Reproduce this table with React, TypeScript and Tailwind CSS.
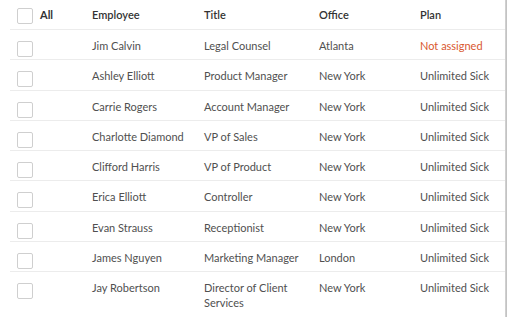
import React from 'react';

// Employee plan assignment table

interface Row {
  name: string;
  title: string;
  office: string;
  plan: string;
}

const rows: Row[] = [
  { name: 'Jim Calvin', title: 'Legal Counsel', office: 'Atlanta', plan: 'Not assigned' },
  { name: 'Ashley Elliott', title: 'Product Manager', office: 'New York', plan: 'Unlimited Sick' },
  { name: 'Carrie Rogers', title: 'Account Manager', office: 'New York', plan: 'Unlimited Sick' },
  { name: 'Charlotte Diamond', title: 'VP of Sales', office: 'New York', plan: 'Unlimited Sick' },
  { name: 'Clifford Harris', title: 'VP of Product', office: 'New York', plan: 'Unlimited Sick' },
  { name: 'Erica Elliott', title: 'Controller', office: 'New York', plan: 'Unlimited Sick' },
  { name: 'Evan Strauss', title: 'Receptionist', office: 'New York', plan: 'Unlimited Sick' },
  { name: 'James Nguyen', title: 'Marketing Manager', office: 'London', plan: 'Unlimited Sick' },
  { name: 'Jay Robertson', title: 'Director of Client Services', office: 'New York', plan: 'Unlimited Sick' },
];

const Checkbox: React.FC = () => (
  <div className="w-4 h-4 rounded-[2px] border border-[#cfcfcf] bg-white shrink-0" />
);

const App: React.FC = () => {
  return (
    <div className="w-[507px] h-[317px] bg-white overflow-hidden flex font-['Lato',sans-serif] text-[11px]">
      <div className="flex-1 pl-[10px]">
        {/* Header */}
        <div className="flex h-[30px] border-b border-[#ececec] text-[#333] font-semibold">
          <div className="w-[82px] flex pl-[7px] pt-[8px] gap-[7px]">
            <Checkbox />
            <span className="leading-[15px] -mt-[1px] font-bold">All</span>
          </div>
          <div className="w-[112px] pt-[7px] leading-[15px]">Employee</div>
          <div className="w-[115px] pt-[7px] leading-[15px]">Title</div>
          <div className="w-[101px] pt-[7px] leading-[15px]">Office</div>
          <div className="flex-1 pt-[7px] leading-[15px]">Plan</div>
        </div>

        {rows.map((r) => (
          <div
            key={r.name}
            className="flex min-h-[30.25px] border-b border-[#ececec] text-[#505050] leading-[15px] last:border-b-0"
          >
            <div className="w-[82px] pl-[7px] pt-[11px]">
              <Checkbox />
            </div>
            <div className="w-[112px] pt-[8px] pb-[6px]">{r.name}</div>
            <div className="w-[115px] pt-[8px] pb-[6px] pr-2">{r.title}</div>
            <div className="w-[101px] pt-[8px] pb-[6px]">{r.office}</div>
            <div
              className={`flex-1 pt-[8px] pb-[6px] ${
                r.plan === 'Not assigned' ? 'text-[#d9582f]' : ''
              }`}
            >
              {r.plan}
            </div>
          </div>
        ))}
      </div>
      {/* Right scroll edge */}
      <div className="w-[2px] h-full bg-gradient-to-r from-[#d6d6d6] to-[#bdbdbd]" />
    </div>
  );
};

export default App;
